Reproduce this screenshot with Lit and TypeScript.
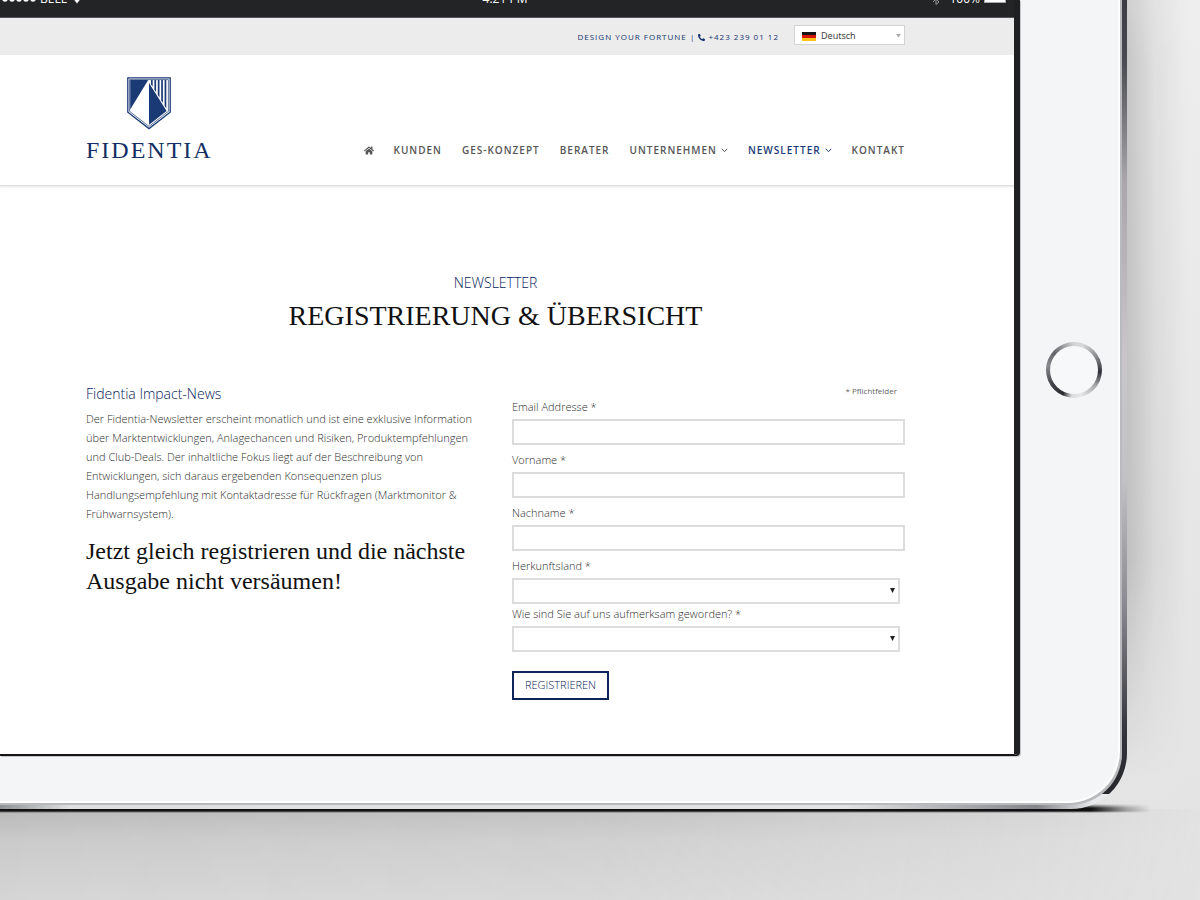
import { LitElement, html, css, svg } from "lit";
import { customElement, state } from "lit/decorators.js";

interface NavItem {
  label: string;
  submenu?: boolean;
  active?: boolean;
}

interface TextField {
  id: string;
  label: string;
  type: string;
}

const NAV: NavItem[] = [
  { label: "Kunden" },
  { label: "GES-Konzept" },
  { label: "Berater" },
  { label: "Unternehmen", submenu: true },
  { label: "Newsletter", submenu: true, active: true },
  { label: "Kontakt" },
];

const TEXT_FIELDS: TextField[] = [
  { id: "email", label: "Email Addresse", type: "email" },
  { id: "vorname", label: "Vorname", type: "text" },
  { id: "nachname", label: "Nachname", type: "text" },
];

const SELECT_FIELDS = [
  { id: "land", label: "Herkunftsland", options: ["Liechtenstein", "Schweiz", "Österreich", "Deutschland"] },
  { id: "quelle", label: "Wie sind Sie auf uns aufmerksam geworden?", options: ["Empfehlung", "Internet", "Presse"] },
];

const homeIcon = html`<svg class="home-icon" viewBox="0 0 576 512" aria-hidden="true">
  <path d="M280.37 148.26L96 300.11V464a16 16 0 0 0 16 16l112.06-.29a16 16 0 0 0 15.92-16V368a16 16 0 0 1 16-16h64a16 16 0 0 1 16 16v95.64a16 16 0 0 0 16 16.05L464 480a16 16 0 0 0 16-16V300L295.67 148.26a12.19 12.19 0 0 0-15.3 0zM571.6 251.47L488 182.56V44.05a12 12 0 0 0-12-12h-56a12 12 0 0 0-12 12v72.61L318.47 43a48 48 0 0 0-61 0L4.34 251.47a12 12 0 0 0-1.6 16.9l25.5 31A12 12 0 0 0 45.15 301l235.22-193.74a12.19 12.19 0 0 1 15.3 0L530.9 301a12 12 0 0 0 16.9-1.6l25.5-31a12 12 0 0 0-1.7-16.93z" />
</svg>`;

const phoneIcon = html`<svg class="phone-icon" viewBox="0 0 512 512" aria-hidden="true">
  <path transform="translate(512 0) scale(-1 1)" d="M493.4 24.6l-104-24c-11.3-2.6-22.9 3.3-27.5 13.9l-48 112c-4.2 9.8-1.4 21.3 6.9 28l60.6 49.6c-36 76.7-98.9 140.5-177.2 177.2l-49.6-60.6c-6.8-8.3-18.2-11.1-28-6.9l-112 48C3.9 366.5-2 378.1.6 389.4l24 104C27.1 504.2 36.7 512 48 512c256.1 0 464-207.5 464-464 0-11.2-7.7-20.9-18.6-23.4z" />
</svg>`;

const chevron = html`<svg class="chevron" viewBox="0 0 7 5" aria-hidden="true">
  <path d="M.7 .8L3.5 3.7 6.3 .8" fill="none" stroke="currentColor" stroke-width="1" />
</svg>`;

const shield = html`<svg class="shield" viewBox="0 0 44 53" aria-hidden="true">
  <path d="M.8 .8H43.2V35.2L22 51.6 .8 35.2Z" fill="#fff" stroke="#1a3a75" stroke-width="1.3" />
  <path d="M2.6 2.6H41.4V34.4L22 49.4 2.6 34.4Z" fill="#fff" stroke="#1a3a75" stroke-width=".7" />
  <path d="M3.2 3H21.2L3.2 32.4Z" fill="#1a3a75" />
  ${[24, 27.4, 30.8, 34.2, 37.6].map(
    (x) => svg`<path d=${`M${x} 3H${x + 1.7}V${(x - 22) * 1.58 + 6.6}L${x} ${(x - 22) * 1.58 + 4}Z`} fill="#1a3a75" />`,
  )}
  <path d="M22 6V47.8L39.6 34Z" fill="#1a3a75" />
</svg>`;

@customElement("app-root")
export class AppRoot extends LitElement {
  @state() private language = "Deutsch";

  static styles = css`
    :host {
      display: block;
      font-family: "Open Sans", "Noto Sans", sans-serif;
      font-size: 11px;
      font-weight: 300;
      color: #2e2e2e;
    }
    * {
      box-sizing: border-box;
    }
    h1,
    h2,
    h3,
    p {
      margin: 0;
      font-weight: inherit;
    }
    a {
      color: inherit;
      text-decoration: none;
    }

    /* Desk surface */
    .scene {
      position: relative;
      z-index: 0;
      min-height: 100vh;
      padding: 0 73px 91px 0;
      overflow: hidden;
      background: linear-gradient(to bottom right, #f2f2f2, #efefef 45%, #e6e6e6 80%, #e3e3e3);
    }

    /* Tablet body */
    .device {
      position: relative;
      padding: 0 7px 6px 0;
      border-radius: 0 0 56px 0;
      background:
        linear-gradient(to bottom, #3c3d42, #4a4b50 60px, #a8a6aa 180px, #c9c7c9 360px, #c2c1c4 480px, #8d8c92 600px, #35363b 730px, #26272c)
          right top / 56px calc(100% - 15px) no-repeat,
        linear-gradient(to right, #8f9296, #dfe1e1 70px, #e2e4e4 75%, #85858c 92%, #e8eaec 97%);
    }
    .device::before {
      content: "";
      position: absolute;
      z-index: -1;
      left: 100%;
      top: 0;
      bottom: 30px;
      width: 60px;
      background: linear-gradient(to right, rgba(0, 0, 0, 0.17), rgba(0, 0, 0, 0.06) 45%, rgba(0, 0, 0, 0));
      mask-image: linear-gradient(to bottom, rgba(0, 0, 0, 0.8), #000 60px, #000 72%, transparent);
    }
    .contact {
      position: absolute;
      z-index: -1;
      left: 0;
      right: -24px;
      top: calc(100% - 5px);
      height: 9px;
      background: linear-gradient(to bottom, rgba(0, 0, 0, 0), #111 4px, #111 7px, rgba(0, 0, 0, 0.4) 8px, rgba(0, 0, 0, 0));
      mask-image: linear-gradient(to left, transparent, rgba(0, 0, 0, 0.3) 25px, #000 60px);
    }
    .floor {
      position: absolute;
      z-index: -2;
      left: 0;
      right: -73px;
      top: 100%;
      height: 91px;
      background: linear-gradient(to bottom, #b9b9b9, #cacaca 35%, #d5d5d5);
      mask-image: linear-gradient(100deg, #000, rgba(0, 0, 0, 0.8) 50%, rgba(0, 0, 0, 0.4) 82%, transparent);
    }
    .face {
      display: flex;
      padding-bottom: 45px;
      background: #f3f5f7;
      border-right: 2px solid #fff;
      border-bottom: 2px solid #fff;
      border-radius: 0 0 52px 0;
      box-shadow:
        0 2px 0 #b9babd,
        2px 0 0 #b9babd,
        2px 2px 0 #b9babd;
    }
    .screen {
      flex: 1;
      min-width: 0;
      background: #fff;
      border-right: 6px solid #1f2022;
      border-bottom: 2px solid #151314;
      border-radius: 0 0 4px 0;
      box-shadow: 1px 1px 0 #c5c7ca;
    }
    .bezel {
      flex: none;
      display: flex;
      justify-content: center;
      width: 98px;
      padding: 342px 0 0 10px;
    }
    .home-button {
      width: 56px;
      height: 56px;
      padding: 4px;
      border: 0;
      border-radius: 50%;
      background: conic-gradient(#d5d5d5, #d8d8d8 20deg, #85858a 60deg, #2f3035 95deg, #a5a5a8 125deg, #e8e8e8 165deg, #dcdcdc 185deg, #2a2b30 205deg, #46474c 240deg, #8a8a90 280deg, #606066 310deg, #d5d5d5);
    }
    .home-button::before {
      content: "";
      display: block;
      height: 100%;
      border-radius: 50%;
      background: #f7f8fa;
    }

    /* Status bar: only its lower edge is in view */
    .status {
      display: flex;
      align-items: flex-end;
      justify-content: space-between;
      height: 18px;
      padding: 0 6px 9px 2px;
      overflow: hidden;
      background: #222426;
      border-bottom: 1px solid #55575a;
      color: #fff;
      font-size: 12px;
      font-weight: 400;
      line-height: 18px;
    }
    .status-side {
      display: flex;
      flex: 1;
      align-items: flex-end;
      gap: 4px;
      white-space: nowrap;
    }
    .status-side.end {
      justify-content: flex-end;
    }
    .signal {
      width: 34px;
      height: 15px;
    }
    .wifi {
      width: 12px;
      height: 16px;
    }
    .bluetooth {
      width: 8px;
      height: 15px;
      margin-right: 5px;
    }
    .battery {
      width: 24px;
      height: 16px;
    }

    .container {
      padding: 0 109px 0 86px;
    }

    /* Contact strip */
    .topbar {
      display: flex;
      align-items: center;
      justify-content: flex-end;
      gap: 15px;
      height: 37px;
      background: #ececec;
      color: #14336e;
      font-size: 8px;
      font-weight: 400;
      letter-spacing: 1px;
      white-space: nowrap;
    }
    .phone-icon {
      width: 7px;
      height: 7px;
      fill: currentColor;
      vertical-align: -1px;
    }
    .language {
      position: relative;
      width: 111px;
      height: 20px;
      margin-bottom: 3px;
    }
    .language-select {
      width: 100%;
      height: 100%;
      padding: 0 16px 0 26px;
      border: 1px solid #d3d3d3;
      border-radius: 0;
      background: #fff;
      color: #444;
      font: 9px "Noto Sans", sans-serif;
      appearance: none;
    }
    .flag,
    .language-arrow {
      position: absolute;
      pointer-events: none;
    }
    .flag {
      left: 8px;
      top: 7px;
      width: 14px;
      height: 9px;
    }
    .language-arrow {
      right: 4px;
      top: 9px;
      width: 5px;
      height: 4px;
      fill: #aaa;
    }

    /* Site header */
    .header {
      display: flex;
      align-items: flex-end;
      justify-content: space-between;
      padding-top: 22px;
      padding-bottom: 21px;
      border-bottom: 1px solid #ddd;
      box-shadow: 0 1px 2px rgba(0, 0, 0, 0.1);
    }
    .logo {
      display: flex;
      flex-direction: column;
      align-items: center;
      gap: 6px;
      color: #142f63;
      font: 24px/28px "Liberation Serif", serif;
      letter-spacing: 2px;
    }
    .shield {
      width: 44px;
      height: 53px;
    }
    .nav {
      display: flex;
      align-items: center;
      gap: 20px;
      padding-bottom: 6px;
      color: #555;
      font-size: 10px;
      font-weight: 600;
      line-height: 16px;
      letter-spacing: 1px;
      text-transform: uppercase;
      white-space: nowrap;
    }
    .nav .active {
      color: #1a3a75;
    }
    .home-icon {
      display: block;
      width: 10px;
      height: 9px;
      fill: currentColor;
    }
    .chevron {
      width: 7px;
      height: 5px;
      margin-left: 4px;
      vertical-align: 1px;
    }

    /* Page title */
    .title {
      padding-top: 86px;
      text-align: center;
    }
    .kicker {
      color: #06225c;
      font-size: 14px;
      line-height: 22px;
    }
    .headline {
      color: #111;
      font: 28px/44px "Liberation Serif", serif;
    }

    /* Two columns */
    .columns {
      display: grid;
      grid-template-columns: 1fr 1fr;
      gap: 33px;
      padding-top: 45px;
      padding-bottom: 54px;
    }
    .intro-title {
      color: #06225c;
      font-size: 14px;
      line-height: 22px;
    }
    .intro-text {
      margin-top: 4px;
      line-height: 19px;
    }
    .call {
      margin-top: 13px;
      color: #111;
      font: 24px/30px "Liberation Serif", serif;
    }
    .required-note {
      padding-right: 8px;
      color: #666;
      font-size: 8px;
      font-weight: 400;
      line-height: 16px;
      text-align: right;
    }
    .field {
      display: flex;
      flex-direction: column;
      gap: 4px;
      margin-bottom: 7px;
      line-height: 16px;
    }
    .field.compact {
      margin: 0 5px 2px 0;
    }
    .control {
      width: 100%;
      height: 26px;
      padding: 0 8px;
      border: 2px solid #dcdcdc;
      border-radius: 0;
      background: #fff;
      color: #555;
      font: inherit;
      appearance: none;
    }
    .select-wrap {
      position: relative;
      display: flex;
    }
    .select-arrow {
      position: absolute;
      right: 5px;
      top: 10px;
      width: 5px;
      height: 5px;
      fill: #222;
      pointer-events: none;
    }
    .submit {
      margin-top: 17px;
      height: 29px;
      padding: 0 11px 2px;
      border: 2px solid #0f2558;
      background: #fff;
      color: #06225c;
      font: 300 11px/16px "Open Sans", sans-serif;
      text-transform: uppercase;
    }
  `;

  private renderStatus() {
    return html`<div class="status">
      <div class="status-side">
        <svg class="signal" viewBox="0 0 34 15" aria-hidden="true">
          ${[0, 1, 2, 3, 4].map((i) => svg`<circle cx=${3 + i * 7} cy="6" r="2.8" fill="#fff" />`)}
        </svg>
        <span>BELL</span>
        <svg class="wifi" viewBox="0 0 12 16" aria-hidden="true">
          <path d="M1 5Q6 1 11 5L6 11.5Z" fill="#fff" />
        </svg>
      </div>
      <span>4:21 PM</span>
      <div class="status-side end">
        <svg class="bluetooth" viewBox="0 0 8 15" aria-hidden="true">
          <path d="M1 3L7 9 4 11.5V1" fill="none" stroke="#999" />
          <path d="M1 9L7 3" fill="none" stroke="#999" />
        </svg>
        <span>100%</span>
        <svg class="battery" viewBox="0 0 24 16" aria-hidden="true">
          <rect x=".5" y="-4" width="21" height="14.5" fill="#fff" stroke="#aaa" />
          <path d="M22.5 1V8" stroke="#777" />
        </svg>
      </div>
    </div>`;
  }

  private renderForm() {
    return html`<form @submit=${(e: Event) => e.preventDefault()}>
      <p class="required-note">* Pflichtfelder</p>
      ${TEXT_FIELDS.map(
        (f) => html`<div class="field">
          <label for=${f.id}>${f.label} *</label>
          <input class="control" id=${f.id} name=${f.id} type=${f.type} required />
        </div>`,
      )}
      ${SELECT_FIELDS.map(
        (f) => html`<div class="field compact">
          <label for=${f.id}>${f.label} *</label>
          <div class="select-wrap">
            <select class="control" id=${f.id} name=${f.id} required>
              <option value=""></option>
              ${f.options.map((o) => html`<option>${o}</option>`)}
            </select>
            <svg class="select-arrow" viewBox="0 0 5 5" aria-hidden="true"><path d="M0 0H5L2.5 5Z" /></svg>
          </div>
        </div>`,
      )}
      <button class="submit" type="submit">Registrieren</button>
    </form>`;
  }

  render() {
    return html`<div class="scene">
      <div class="device">
        <div class="floor"></div>
        <div class="contact"></div>
        <div class="face">
          <div class="screen">
            ${this.renderStatus()}
            <div class="topbar container">
              <span>DESIGN YOUR FORTUNE | ${phoneIcon} <a href="tel:+4232390112">+423 239 01 12</a></span>
              <div class="language">
                <select
                  class="language-select"
                  aria-label="Sprache"
                  .value=${this.language}
                  @change=${(e: Event) => (this.language = (e.target as HTMLSelectElement).value)}
                >
                  <option>Deutsch</option>
                  <option>English</option>
                </select>
                <svg class="flag" viewBox="0 0 14 9" aria-hidden="true">
                  <rect width="14" height="3" fill="#151515" />
                  <rect y="3" width="14" height="3" fill="#d8160c" />
                  <rect y="6" width="14" height="3" fill="#fbc21a" />
                </svg>
                <svg class="language-arrow" viewBox="0 0 5 4" aria-hidden="true"><path d="M0 0H5L2.5 3.5Z" /></svg>
              </div>
            </div>
            <header class="header container">
              <a class="logo" href="#">${shield}<span>FIDENTIA</span></a>
              <nav class="nav">
                <a href="#" aria-label="Startseite">${homeIcon}</a>
                ${NAV.map(
                  (n) => html`<a href="#" class=${n.active ? "active" : ""}>${n.label}${n.submenu ? chevron : ""}</a>`,
                )}
              </nav>
            </header>
            <main>
              <div class="title container">
                <p class="kicker">NEWSLETTER</p>
                <h1 class="headline">REGISTRIERUNG &amp; ÜBERSICHT</h1>
              </div>
              <div class="columns container">
                <section>
                  <h2 class="intro-title">Fidentia Impact-News</h2>
                  <p class="intro-text">
                    Der Fidentia-Newsletter erscheint monatlich und ist eine exklusive Information über
                    Marktentwicklungen, Anlagechancen und Risiken, Produktempfehlungen und Club-Deals. Der inhaltliche
                    Fokus liegt auf der Beschreibung von Entwicklungen, sich daraus ergebenden Konsequenzen plus
                    Handlungsempfehlung mit Kontaktadresse für Rückfragen (Marktmonitor &amp; Frühwarnsystem).
                  </p>
                  <h3 class="call">Jetzt gleich registrieren und die nächste Ausgabe nicht versäumen!</h3>
                </section>
                ${this.renderForm()}
              </div>
            </main>
          </div>
          <div class="bezel"><button class="home-button" type="button" aria-label="Home"></button></div>
        </div>
      </div>
    </div>`;
  }
}
